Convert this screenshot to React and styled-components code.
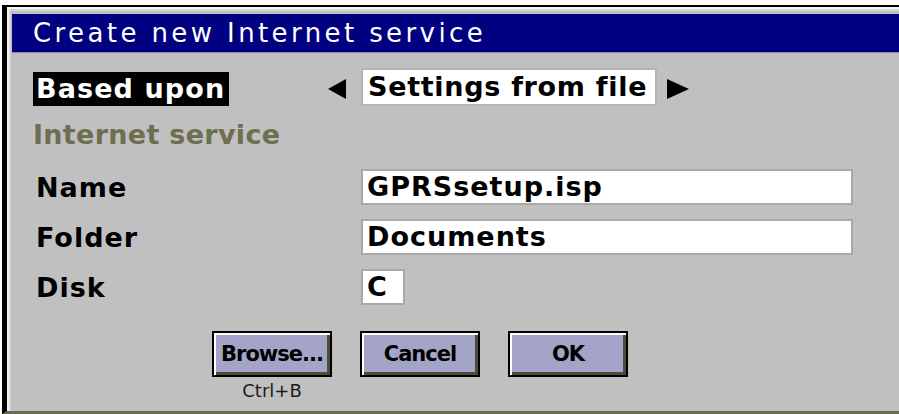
import React from "react";
import styled, { createGlobalStyle } from "styled-components";

const GlobalStyle = createGlobalStyle`
  html, body {
    margin: 0;
    padding: 0;
    background: #ffffff;
  }
  body {
    font-family: "DejaVu Sans", "Liberation Sans", sans-serif;
  }
`;

const Dialog = styled.div`
  box-sizing: border-box;
  width: 897px;
  height: 409px;
  margin: 5px 0 0 2px;
  padding: 7px 0 0 5px;
  background: #c0c0c0;
  border-left: 5px solid #000000;
  border-top: 2px solid #000000;
  border-bottom: 3px solid #6c6c54;
  box-shadow: inset 2px 2px 0 #f6f6f6, inset 4px 4px 0 #d6d6d6;
  display: flex;
  flex-direction: column;
`;

const TitleBar = styled.div`
  height: 38px;
  line-height: 38px;
  padding-left: 21px;
  background: #000080;
  border-bottom: 1px solid #8a8aa8;
  color: #ffffff;
  font-size: 26px;
  letter-spacing: 3.4px;
  white-space: nowrap;
`;

const Body = styled.div`
  padding: 15px 0 0 21px;
  display: flex;
  flex-direction: column;
`;

const SelectorRow = styled.div`
  display: flex;
  align-items: flex-end;
  height: 38px;
`;

const LabelCell = styled.div`
  width: 295px;
  display: flex;
  align-items: flex-end;
`;

const HighlightLabel = styled.div`
  box-sizing: border-box;
  width: 196px;
  height: 34px;
  line-height: 34px;
  padding-left: 3px;
  background: #000000;
  color: #ffffff;
  font-size: 27px;
  font-weight: bold;
  letter-spacing: 1.1px;
  white-space: nowrap;
`;

const ArrowCell = styled.div`
  width: ${(p) => p.width}px;
  height: 38px;
  display: flex;
  align-items: center;
  padding-top: 4px;
  box-sizing: border-box;
  margin-left: ${(p) => p.offset || 0}px;
`;

const ChoiceBox = styled.div`
  box-sizing: border-box;
  width: 296px;
  height: 38px;
  line-height: 34px;
  padding-left: 5px;
  background: #ffffff;
  border: 2px solid #b4b4b4;
  color: #000000;
  font-size: 27px;
  font-weight: bold;
  letter-spacing: 0.7px;
  white-space: nowrap;
`;

const SectionHeading = styled.div`
  margin-top: 12px;
  height: 34px;
  line-height: 34px;
  color: #6e6e50;
  font-size: 27px;
  font-weight: bold;
  letter-spacing: 0.3px;
`;

const Fields = styled.div`
  margin-top: 17px;
  display: flex;
  flex-direction: column;
  gap: 14px;
`;

const FieldRow = styled.div`
  display: flex;
  align-items: center;
  height: 36px;
`;

const FieldLabel = styled.div`
  box-sizing: border-box;
  width: 328px;
  padding-left: 3px;
  color: #000000;
  font-size: 27px;
  font-weight: bold;
  letter-spacing: 1px;
`;

const TextField = styled.div`
  box-sizing: border-box;
  width: ${(p) => p.width}px;
  height: 36px;
  line-height: 32px;
  padding-left: 4px;
  background: #ffffff;
  border: 2px solid #a9a9a9;
  color: #000000;
  font-size: 27px;
  font-weight: bold;
  letter-spacing: 1px;
  white-space: nowrap;
  overflow: hidden;
`;

const ButtonBar = styled.div`
  margin-top: 26px;
  padding-left: 179px;
  display: flex;
  gap: 28px;
`;

const ButtonStack = styled.div`
  display: flex;
  flex-direction: column;
  align-items: center;
`;

const Button = styled.button`
  box-sizing: border-box;
  width: 120px;
  height: 46px;
  margin: 0;
  padding: 0;
  background: #a4a4c8;
  border: 2px solid #000000;
  box-shadow: inset 2px 2px 0 #ffffff, inset -3px -3px 0 #4e4e38;
  color: #000000;
  font-family: "DejaVu Sans", "Liberation Sans", sans-serif;
  font-size: 21px;
  font-weight: bold;
  letter-spacing: -1px;
  cursor: pointer;
`;

const Hint = styled.div`
  margin-top: 3px;
  color: #1a1a1a;
  font-size: 18px;
`;

const LeftArrow = () => (
  <svg width="18" height="20" viewBox="0 0 18 20">
    <polygon points="0,10 18,0 18,20" fill="#000" />
  </svg>
);

const RightArrow = () => (
  <svg width="22" height="20" viewBox="0 0 22 20">
    <polygon points="0,0 22,10 0,20" fill="#000" />
  </svg>
);

const fields = [
  { label: "Name", value: "GPRSsetup.isp", width: 492 },
  { label: "Folder", value: "Documents", width: 492 },
  { label: "Disk", value: "C", width: 44 },
];

const buttons = [
  { text: "Browse...", hint: "Ctrl+B" },
  { text: "Cancel" },
  { text: "OK" },
];

const App = () => (
  <>
    <GlobalStyle />
    <Dialog>
      <TitleBar>Create new Internet service</TitleBar>
      <Body>
        <SelectorRow>
          <LabelCell>
            <HighlightLabel>Based upon</HighlightLabel>
          </LabelCell>
          <ArrowCell width={33}>
            <LeftArrow />
          </ArrowCell>
          <ChoiceBox>Settings from file</ChoiceBox>
          <ArrowCell width={30} offset={10}>
            <RightArrow />
          </ArrowCell>
        </SelectorRow>

        <SectionHeading>Internet service</SectionHeading>

        <Fields>
          {fields.map((f) => (
            <FieldRow key={f.label}>
              <FieldLabel>{f.label}</FieldLabel>
              <TextField width={f.width}>{f.value}</TextField>
            </FieldRow>
          ))}
        </Fields>

        <ButtonBar>
          {buttons.map((b) => (
            <ButtonStack key={b.text}>
              <Button>{b.text}</Button>
              {b.hint && <Hint>{b.hint}</Hint>}
            </ButtonStack>
          ))}
        </ButtonBar>
      </Body>
    </Dialog>
  </>
);

export default App;
